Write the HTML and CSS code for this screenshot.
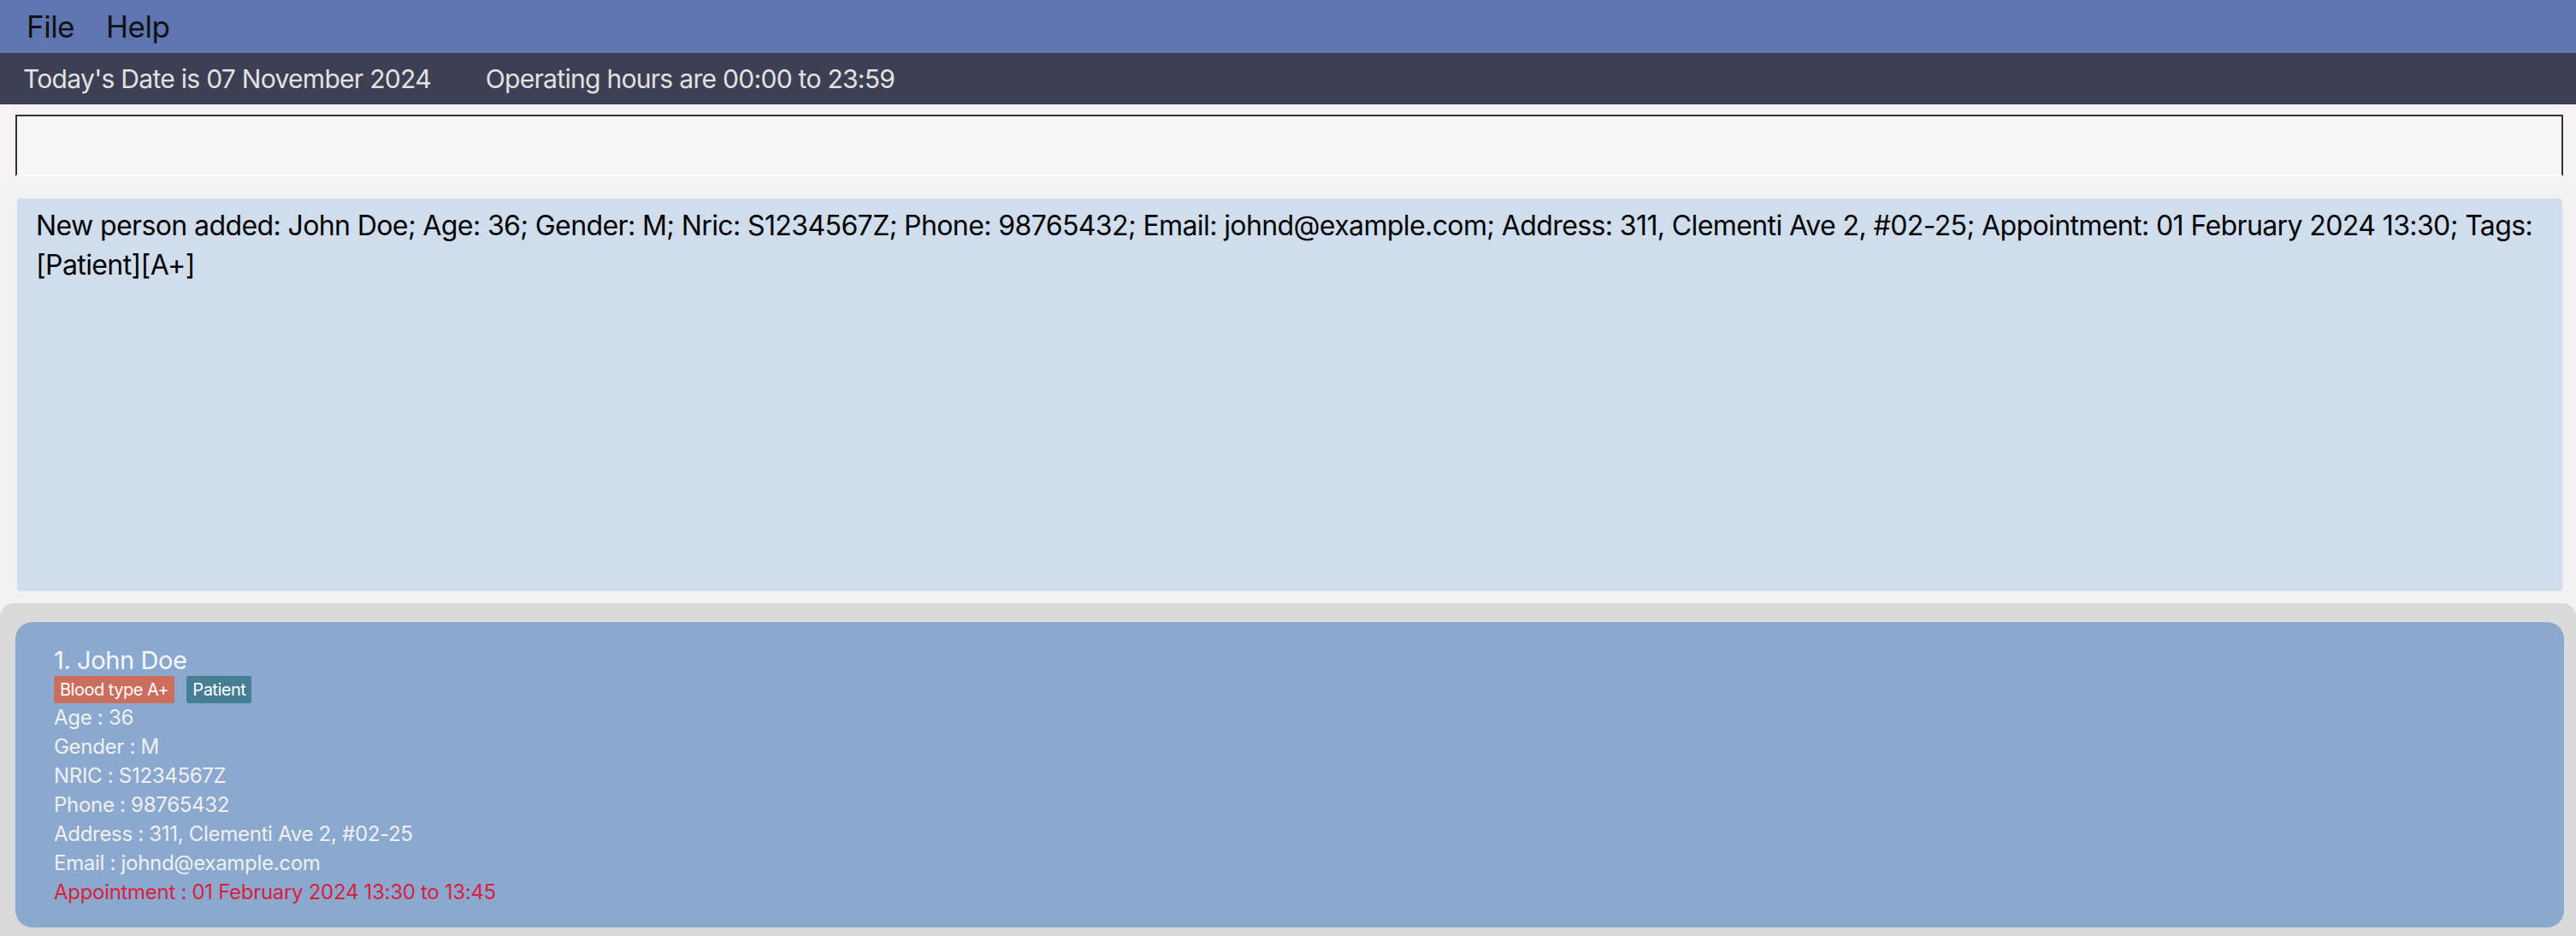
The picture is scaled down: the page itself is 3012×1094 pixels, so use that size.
FILE: index.html
```html
<!DOCTYPE html>
<html lang="en">
<head>
<meta charset="utf-8">
<title>Clinic</title>
<link rel="stylesheet" href="styles.css">
</head>
<body>
<div class="menubar">
  <span class="menu-item">File</span>
  <span class="menu-item">Help</span>
</div>
<div class="statusbar">
  <span class="status-text">Today's Date is 07 November 2024</span>
  <span class="status-text">Operating hours are 00:00 to 23:59</span>
</div>
<div class="command-area">
  <div class="command-box"></div>
</div>
<div class="result-pane">
  <div class="result-box">New person added: John Doe; Age: 36; Gender: M; Nric: S1234567Z; Phone: 98765432; Email: johnd@example.com; Address: 311, Clementi Ave 2, #02-25; Appointment: 01 February 2024 13:30; Tags: [Patient][A+]</div>
</div>
<div class="list-panel">
  <div class="card">
    <div class="card-name">1. John Doe</div>
    <div class="tags">
      <span class="tag tag-blood">Blood type A+</span>
      <span class="tag tag-patient">Patient</span>
    </div>
    <div class="field">Age : 36</div>
    <div class="field">Gender : M</div>
    <div class="field">NRIC : S1234567Z</div>
    <div class="field">Phone : 98765432</div>
    <div class="field">Address : 311, Clementi Ave 2, #02-25</div>
    <div class="field">Email : johnd@example.com</div>
    <div class="field field-appt">Appointment : 01 February 2024 13:30 to 13:45</div>
  </div>
</div>
</body>
</html>
```
FILE: styles.css
```css
* { box-sizing: border-box; }
html, body {
  margin: 0;
  padding: 0;
}
body {
  width: 3012px;
  height: 1094px;
  overflow: hidden;
  background: #f5f3f3;
  font-family: Inter, "Noto Sans", sans-serif;
  display: flex;
  flex-direction: column;
}
.menubar {
  height: 62px;
  background: #5e75b1;
  display: flex;
  align-items: center;
  padding-left: 31px;
  gap: 37px;
  flex: none;
}
.menu-item {
  font-size: 35px;
  color: #111;
  letter-spacing: -0.5px;
}
.statusbar {
  height: 60px;
  background: #3d4055;
  display: flex;
  align-items: center;
  padding-left: 27px;
  gap: 64px;
  flex: none;
}
.status-text {
  font-size: 30px;
  color: #e2e2e2;
  letter-spacing: -0.7px;
}
.command-area {
  flex: none;
  padding: 12px 15px 11px 18px;
}
.command-box {
  height: 72px;
  background: #f7f7f7;
  border: 2px solid #333;
  border-bottom: 2px solid #ffffff;
}
.result-pane {
  flex: none;
  height: 488px;
  background: #f3f2f2;
  border-radius: 6px 6px 0 0;
  padding: 15px 16px 14px 20px;
}
.result-box {
  height: 459px;
  background: #d0ddec;
  border-radius: 4px;
  padding: 9px 20px 0 22px;
  font-size: 32px;
  line-height: 46px;
  color: #000;
  letter-spacing: -0.6px;
}
.list-panel {
  flex: 1;
  background: #dadada;
  border-radius: 16px 16px 0 0;
  padding: 22px 14px 0 18px;
}
.card {
  height: 357px;
  background: #8ba8cf;
  border-radius: 20px;
  padding: 27px 20px 0 45px;
  color: #f2f2f2;
}
.card-name {
  font-size: 29px;
  line-height: 36px;
  color: #f7f7f7;
  letter-spacing: -0.4px;
}
.tags {
  display: flex;
  gap: 14px;
  height: 32px;
}
.tag {
  height: 32px;
  line-height: 32px;
  padding: 0 7px;
  font-size: 20px;
  border-radius: 3px;
  color: #fff;
  letter-spacing: -0.5px;
}
.tag-blood { background: #cc6e5e; }
.tag-patient { background: #467e94; }
.field {
  font-size: 24px;
  line-height: 34px;
  letter-spacing: -0.3px;
  color: #f0f0f0;
}
.field-appt { color: #dc1e3c; }
```
